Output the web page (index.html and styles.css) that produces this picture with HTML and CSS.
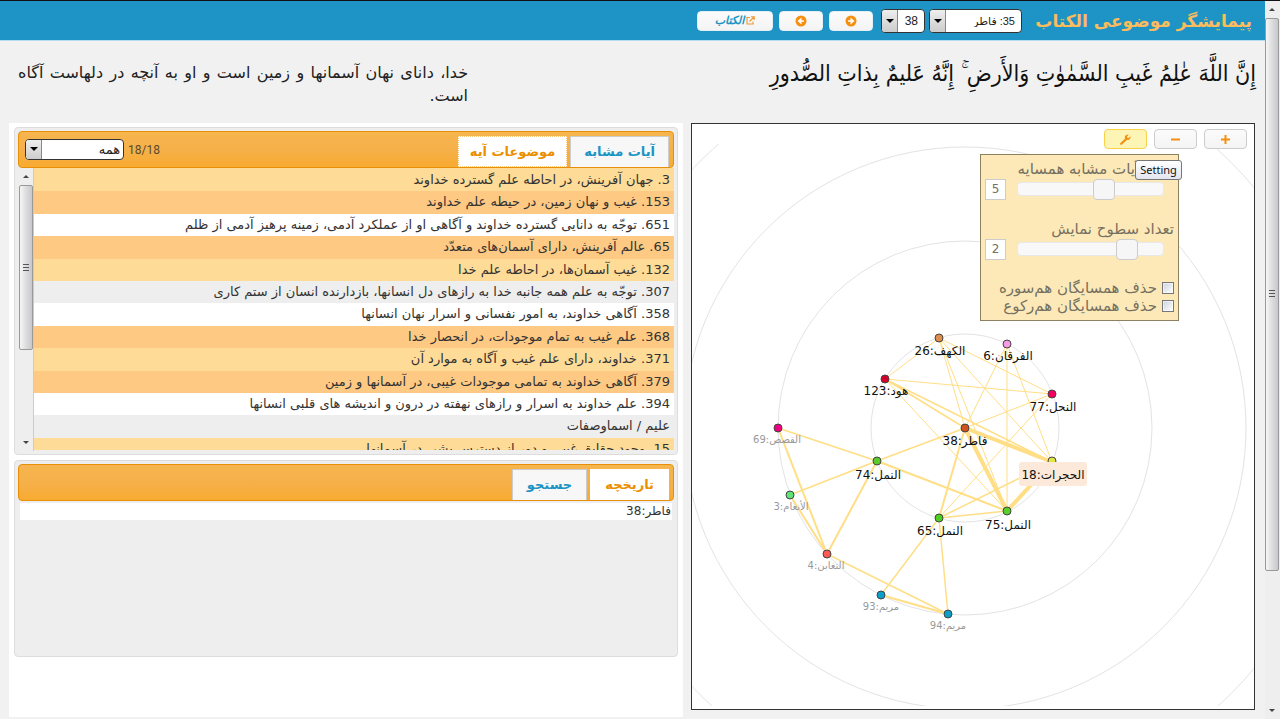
FILE: index.html
```html
<!DOCTYPE html>
<html lang="fa">
<head>
<meta charset="utf-8">
<title>پیمایشگر موضوعی الکتاب</title>
<link rel="stylesheet" href="styles.css">
</head>
<body>
<div class="window">
  <div class="page" dir="rtl">
    <header class="topbar">
      <h1 class="title">پیمایشگر موضوعی الکتاب</h1>
      <div class="selects">
        <span class="combo combo-sura"><select aria-label="سوره"><option>35: فاطر</option></select></span>
        <span class="combo combo-aya"><select aria-label="آیه"><option>38</option></select></span>
      </div>
      <nav class="nav">
        <button class="btn btn-top" aria-label="بعدی"><svg width="12" height="12" viewBox="0 0 12 12"><circle cx="6" cy="6" r="5.5" fill="#f68f0e"/><path d="M3 6h3.500M6.200 4 8.400 6 6.200 8z" fill="#fff" stroke="#fff" stroke-width="1.4"/></svg></button>
        <button class="btn btn-top" aria-label="قبلی"><svg width="12" height="12" viewBox="0 0 12 12"><circle cx="6" cy="6" r="5.5" fill="#f68f0e"/><path d="M9 6H5.500M5.800 4 3.600 6 5.800 8z" fill="#fff" stroke="#fff" stroke-width="1.4"/></svg></button>
        <a class="btn btn-top btn-link" href="#"><svg width="9" height="9" viewBox="0 0 9 9" fill="none" stroke="#f0962e" stroke-width="1.1"><path d="M4 1.500H1v6.500h6V5.500M3.500 5.500 8 1M5 .8h3.200V4"/></svg>الکتاب</a>
      </nav>
    </header>

    <section class="verse">
      <p class="arabic" lang="ar">إِنَّ اللَّهَ عٰلِمُ غَيبِ السَّمٰوٰتِ وَالأَرضِ ۚ إِنَّهُ عَليمٌ بِذاتِ الصُّدورِ</p>
      <p class="translation">خدا، دانای نهان آسمانها و زمین است و او به آنچه در دلهاست آگاه است.</p>
    </section>

    <main class="columns">
      <section class="graph">
        <svg class="canvas" viewBox="692 144 562 562" direction="ltr">
          <g class="rings">
            <circle cx="965" cy="428" r="94"/><circle cx="965" cy="428" r="187"/><circle cx="965" cy="428" r="281"/><circle cx="965" cy="428" r="376"/>
          </g>
          <g class="edges">
            <path class="thin" d="M939 338 885 379M939 338 1052 394M939 338 1052 462M939 338 965 428M939 338 1007 511M885 379 1052 394M885 379 1007 511M1007 344 965 428M1007 344V511M1007 344 1052 462M965 428 1052 394M1052 394 939 518"/>
            <path class="link" d="M885 379 965 428M885 379 1052 462M778 428 877 461M790 495 877 461 965 428M939 518 881 595M939 518 948 614M939 518 1007 511M939 518 1052 462M827 554 948 614"/>
            <path class="mid" d="M965 428 939 518M877 461 1007 511M877 461 827 554M778 428 827 554M790 495 827 554M881 595 948 614"/>
            <path class="thick" d="M965 428 1052 462M965 428 1007 511M1007 511 1052 462"/>
          </g>
          <g class="nodes">
            <circle cx="939" cy="338" r="4" fill="#e08d4b"/><circle cx="1007" cy="344" r="4" fill="#f79be6"/>
            <circle cx="885" cy="379" r="4" fill="#d4002c"/><circle cx="1052" cy="394" r="4" fill="#f5005e"/>
            <circle cx="965" cy="428" r="4" fill="#d2521f"/><circle cx="778" cy="428" r="4" fill="#f00080"/>
            <circle cx="877" cy="461" r="4" fill="#5bcb2b"/><circle cx="1052" cy="461" r="4" fill="#e3e63e"/>
            <circle cx="790" cy="495" r="4" fill="#5fe276"/><circle cx="1007" cy="511" r="4" fill="#58cf2a"/>
            <circle cx="939" cy="518" r="4" fill="#4fcf20"/><circle cx="827" cy="554" r="4" fill="#ff5b52"/>
            <circle cx="881" cy="595" r="4" fill="#0b9ec7"/><circle cx="948" cy="614" r="4" fill="#0b9ec7"/>
          </g>
          <rect x="1019" y="462" width="68" height="24" rx="3" fill="#fde9d9"/>
          <g class="labels" direction="rtl">
            <text x="940" y="355">الکهف:26</text><text x="1008" y="360">الفرقان:6</text>
            <text x="886" y="395">هود:123</text><text x="1053" y="411">النحل:77</text>
            <text x="965" y="445">فاطر:38</text><text x="878" y="479">النمل:74</text>
            <text x="1053" y="479">الحجرات:18</text><text x="1008" y="529">النمل:75</text>
            <text x="940" y="535">النمل:65</text>
          </g>
          <g class="labels far" direction="rtl">
            <text x="777" y="443">القصص:69</text><text x="791" y="510">الأنعام:3</text><text x="826" y="569">التغابن:4</text>
            <text x="881" y="610">مریم:93</text><text x="948" y="629">مریم:94</text>
          </g>
        </svg>
        <div class="tools">
          <button class="btn" aria-label="+"><svg width="9" height="9" viewBox="0 0 9 9" stroke="#f68f0e" stroke-width="2"><path d="M0 4.500H9M4.500 0V9"/></svg></button>
          <button class="btn" aria-label="−"><svg width="9" height="9" viewBox="0 0 9 9" stroke="#f68f0e" stroke-width="2"><path d="M0 4.500H9"/></svg></button>
          <button class="btn btn-on" aria-label="Setting"><svg width="11" height="11" viewBox="0 0 11 11"><path d="M1.200 9.800 6 5.200" stroke="#f68f0e" stroke-width="2.200" stroke-linecap="round"/><path d="M8.800.6 7 2.600l.3 1.200 1.300.2L10.500 2.200c.4 2-.8 3.700-2.700 3.700-2 .1-3.400-1.400-3-3.100C5.200 1.200 7 .2 8.800.6z" fill="#f68f0e"/></svg></button>
        </div>
        <form class="settings">
          <label for="near">تعداد آیات مشابه همسایه</label>
          <div class="slide"><input id="near" type="range" min="0" max="100" value="39"><output>5</output></div>
          <label for="level">تعداد سطوح نمایش</label>
          <div class="slide"><input id="level" type="range" min="0" max="100" value="20"><output>2</output></div>
          <div class="checks">
            <label><input type="checkbox">حذف همسایگان هم‌سوره</label>
            <label><input type="checkbox">حذف همسایگان هم‌رکوع</label>
          </div>
          <span class="tip" role="tooltip" dir="ltr">Setting</span>
        </form>
      </section>

      <section class="side">
        <div class="widget topics">
          <div class="tabs">
            <a class="tab" href="#">آیات مشابه</a>
            <a class="tab tab-on tab-focus" href="#">موضوعات آیه</a>
            <div class="filter">
              <span>18/18</span>
              <span class="combo combo-all"><select aria-label="موضوع"><option>همه</option></select></span>
            </div>
          </div>
          <div class="scroll">
            <ul class="list">
              <li class="y">3. جهان آفرینش، در احاطه علم گسترده خداوند</li>
              <li class="o">153. غیب و نهان زمین، در حیطه علم خداوند</li>
              <li>651. توجّه به دانایی گسترده خداوند و آگاهی او از عملکرد آدمی، زمینه پرهیز آدمی از ظلم</li>
              <li class="o">65. عالم آفرینش، دارای آسمان‌های متعدّد</li>
              <li class="y">132. غیب آسمان‌ها، در احاطه علم خدا</li>
              <li class="g">307. توجّه به علم همه جانبه خدا به رازهای دل انسانها، بازدارنده انسان از ستم کاری</li>
              <li>358. آگاهی خداوند، به امور نفسانی و اسرار نهان انسانها</li>
              <li class="o">368. علم غیب به تمام موجودات، در انحصار خدا</li>
              <li class="y">371. خداوند، دارای علم غیب و آگاه به موارد آن</li>
              <li class="o">379. آگاهی خداوند به تمامی موجودات غیبی، در آسمانها و زمین</li>
              <li>394. علم خداوند به اسرار و رازهای نهفته در درون و اندیشه های قلبی انسانها</li>
              <li class="g">علیم / اسماوصفات</li>
              <li class="y">15. وجود حقایق غیبی و دور از دسترس بشر، در آسمانها</li>
            </ul>
            <div class="bar"><i class="up"></i><i class="thumb"></i><i class="down"></i></div>
          </div>
        </div>
        <div class="widget history">
          <div class="tabs">
            <a class="tab tab-on" href="#">تاریخچه</a>
            <a class="tab" href="#">جستجو</a>
          </div>
          <ul class="log"><li>فاطر:38</li></ul>
        </div>
      </section>
    </main>
  </div>
  <div class="bar bar-page"><i class="up"></i><i class="thumb"></i><i class="down"></i></div>
</div>
</body>
</html>
```
FILE: styles.css
```css
* { box-sizing: border-box; }
body {
  margin: 0;
  background: #f1f1f1;
  color: #333;
  font-family: "DejaVu Sans", sans-serif;
}
p, h1, ul { margin: 0; padding: 0; }
a { text-decoration: none; }
.window { display: flex; min-height: 100vh; border-top: 1px solid #111; }
.page { flex: 1; min-width: 0; display: flex; flex-direction: column; }

/* top bar */
.topbar {
  display: flex;
  align-items: center;
  height: 40px;
  padding: 0 13px 0 12px;
  background: #1e94c6;
  border-bottom: 1px solid #b5dcf0;
}
.title { width: 217px; white-space: nowrap; font-size: 17px; color: #fcbc5c; }
.selects { display: flex; gap: 4px; margin-right: 13px; }
.nav { display: flex; gap: 6px; margin-right: 8px; }
.combo { position: relative; display: block; height: 24px; }
.combo select {
  appearance: none;
  width: 100%;
  height: 100%;
  padding: 0 6px 0 18px;
  border: 1px solid #333;
  border-radius: 4px;
  background: #fff;
  color: #222;
  font: 11px "Liberation Sans", "DejaVu Sans", sans-serif;
  direction: rtl;
}
.combo::before {
  content: "";
  position: absolute;
  left: 1px; top: 1px; bottom: 1px;
  width: 15px;
  background: linear-gradient(#eee, #ccc);
  border-right: 1px solid #888;
  border-radius: 3px 0 0 3px;
  pointer-events: none;
}
.combo::after {
  content: "";
  position: absolute;
  left: 5px; top: 10px;
  border: 4px solid transparent;
  border-top-color: #000;
  border-bottom: 0;
  pointer-events: none;
}
.combo-sura { width: 93px; }
.combo-aya { width: 44px; }
.combo-aya select { font-size: 12px; }
.combo-all { width: 99px; height: 21px; }
.combo-all select { font: 13px "DejaVu Sans", sans-serif; padding-right: 3px; }
.combo-all::after { top: 8px; }

.btn {
  display: flex;
  align-items: center;
  justify-content: center;
  width: 43px;
  height: 20px;
  padding: 0;
  border: 1px solid #ccc;
  border-radius: 4px;
  background: linear-gradient(#fbfbfb, #f4f4f4);
}
.btn-top { width: 44px; border-color: #e4eef3; }
.btn-link { width: 76px; gap: 2px; font-size: 11px; font-style: italic; font-weight: bold; color: #1c94c4; }
.btn-on { background: #fdf5b5; border-color: #f8d24a; }

/* verse */
.verse { display: flex; justify-content: space-between; height: 82px; }
.arabic {
  padding: 8px 9px 0 0;
  font-family: "DejaVu Sans Condensed", "DejaVu Sans", sans-serif;
  font-size: 23px;
  line-height: 48px;
  white-space: nowrap;
  color: #111;
}
.translation { width: 37%; padding: 20px 0 0 18px; font-size: 16px; line-height: 23px; text-align: justify; color: #222; }

/* columns */
.columns {
  flex: 1;
  display: grid;
  grid-template-columns: minmax(0, 564fr) minmax(0, 674fr);
  gap: 8px;
  padding: 0 10px 0 9px;
}
.graph {
  position: relative;
  margin-bottom: 9px;
  border: 1px solid #333;
  background: #fff;
}
.canvas { display: block; width: 100%; height: auto; margin-top: 20px; }
.rings { fill: none; stroke: #e3e3e6; }
.edges { fill: none; stroke: #ffde85; }
.thin { stroke-width: 1; }
.link { stroke-width: 1.500; }
.mid { stroke-width: 2; }
.thick { stroke-width: 4; }
.nodes { stroke: #444; stroke-width: 1; }
.labels { font-size: 12px; text-anchor: middle; fill: #111; }
.far { font-size: 10px; fill: #999; }
.tools { position: absolute; top: 5px; right: 7px; display: flex; gap: 7px; }
.settings {
  position: absolute;
  top: 30px; right: 75px;
  width: 199px;
  height: 167px;
  padding: 4px;
  border: 1px solid #8d8062;
  background: #fde9b8;
  color: #757060;
  font-size: 15px;
  line-height: 20px;
}
.settings > label { display: block; }
.slide { display: flex; justify-content: space-between; height: 40px; padding-right: 10px; align-items: flex-start; }
.slide input {
  appearance: none;
  width: 147px;
  height: 14px;
  margin: 3px 0;
  border: 1px solid #e8e8e8;
  border-radius: 4px;
  background: #f8f8f8;
}
.slide input::-webkit-slider-thumb {
  appearance: none;
  width: 22px;
  height: 21px;
  border: 1px solid #ccc;
  border-radius: 4px;
  background: #f6f6f6;
}
.slide output {
  width: 21px;
  height: 21px;
  border: 1px solid #ccc;
  background: #fff;
  font-size: 12px;
  line-height: 19px;
  text-align: center;
}
.checks { line-height: 18px; }
.checks label { display: flex; align-items: center; gap: 5px; }
.checks input { appearance: none; width: 12px; height: 12px; margin: 0; border: 1px solid #777; background: linear-gradient(135deg, #ccd3dc, #fff); outline: 1px solid #fff8; outline-offset: -2px; }
.tip {
  position: absolute;
  top: 5px; right: -4px;
  width: 47px;
  border: 1px solid #767676;
  border-radius: 3px;
  background: linear-gradient(#fff, #e4e5f0);
  color: #111;
  font: 11px/18px "Noto Sans", sans-serif;
  text-align: center;
}

/* side column */
.side { margin-bottom: 2px; padding: 4px 5px; background: #fff; }
.widget { padding: 3px; border: 1px solid #ddd; border-radius: 4px; background: #eee; }
.tabs {
  display: flex;
  align-items: flex-end;
  gap: 3px;
  height: 37px;
  padding: 0 4px;
  border: 1px solid #e78f08;
  border-radius: 4px;
  background: linear-gradient(#f6b54e, #f6b04a 50%, #f8ab30);
}
.tab {
  height: 31px;
  padding: 0 13px;
  border: 1px solid #ccc;
  border-bottom: 0;
  background: #f7f7f7;
  color: #1c94c4;
  font-size: 13px;
  font-weight: bold;
  line-height: 29px;
}
.history .tab { padding: 0 14px; }
.tab-on { background: #fff; border-color: #fff; color: #eb8f00; }
.tab-focus { border: 1px dotted #f8c97a; padding: 0 11px; }
.filter { display: flex; align-items: center; gap: 4px; height: 35px; margin-right: auto; font: 12px Roboto, sans-serif; color: #5a4a2c; padding-left: 2px; }
.scroll { display: flex; height: 283px; overflow: hidden; }
.list { flex: 1; height: 282px; overflow: hidden; list-style: none; padding-top: 1px; background: #fdda96; }
.list li { padding: 0 4px; font-size: 13px; line-height: 1.723; white-space: nowrap; background: #fff; }
.list .y { background: #fedb96; }
.list .o { background: #fec983; }
.list .g { background: #eee; }
.history { height: 197px; margin-top: 5px; }
.log { list-style: none; padding: 2px 2px 0; font-size: 12px; }
.log li { height: 17px; padding: 0 1px; line-height: 17px; background: #fff; }

/* scrollbars */
.bar { display: flex; flex-direction: column; width: 16px; background: #eee; border-right: 1px solid #ccc; }
.bar i { display: block; width: 14px; height: 17px; }
.up::before, .down::before { content: ""; display: block; margin: 7px 4px; border: 3px solid transparent; border-bottom: 3px solid #444; border-top: 0; }
.down::before { border-top: 3px solid #444; border-bottom: 0; }
.bar .down { margin-top: auto; }
.bar .thumb {
  height: 165px;
  display: flex;
  align-items: center;
  justify-content: center;
  border: 1px solid #999;
  border-radius: 2px;
  background: linear-gradient(90deg, #f6f6f6, #ddd 50%, #c6c8cc);
}
.thumb::before { content: ""; width: 6px; height: 8px; background: repeating-linear-gradient(#555 0 1px, transparent 1px 3px); }
.bar-page { border: 0; width: 15px; }
.bar-page .thumb { flex: 0 0 77%; }
```
